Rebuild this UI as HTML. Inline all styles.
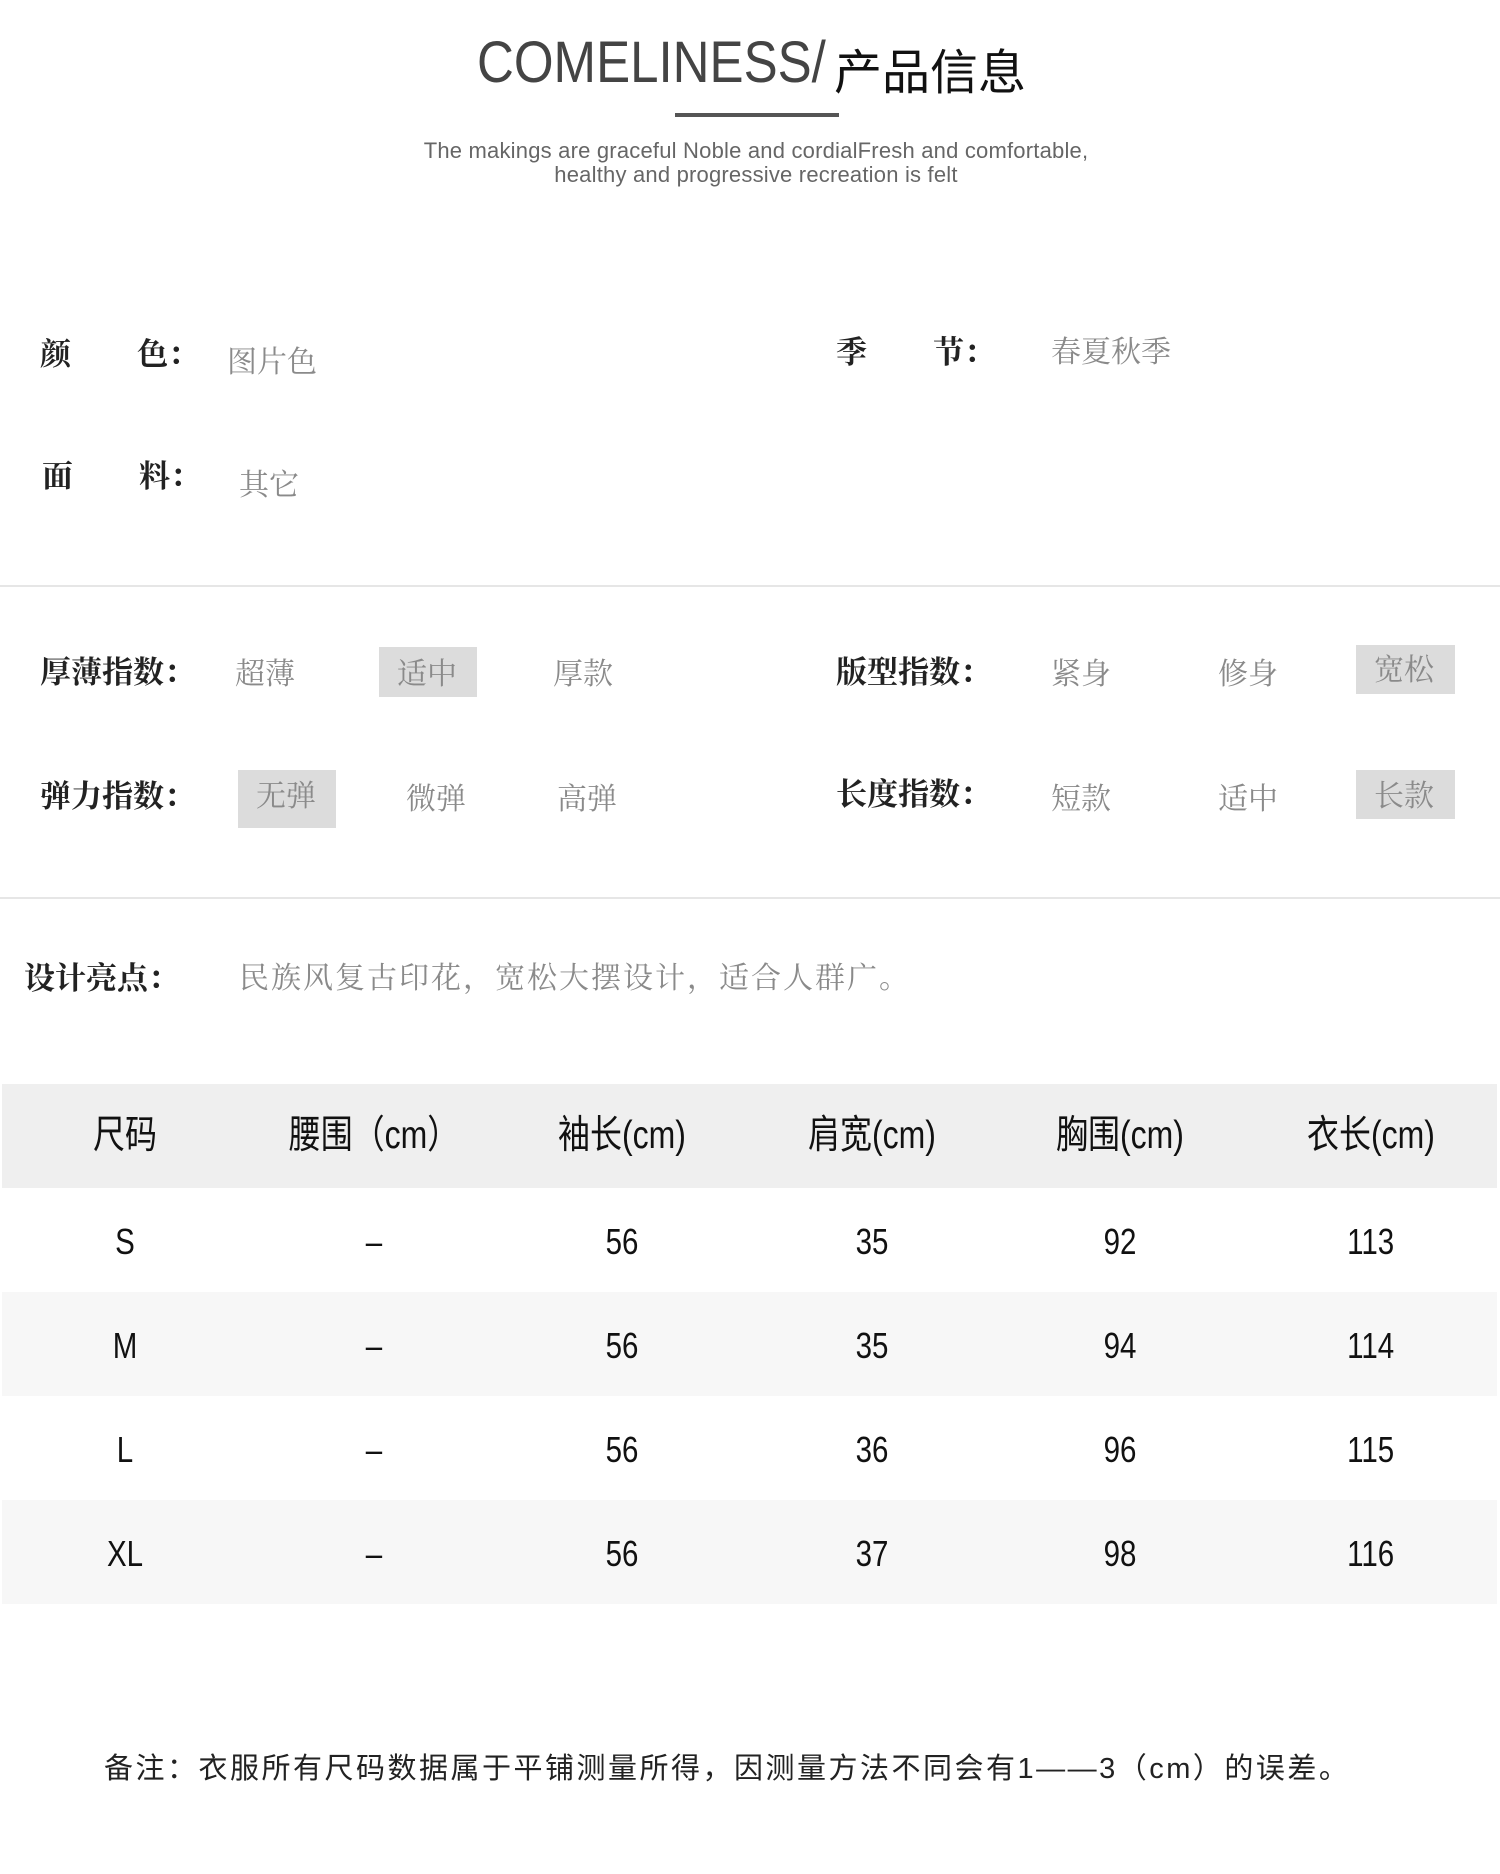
<!DOCTYPE html>
<html><head><meta charset="utf-8">
<style>
*{margin:0;padding:0;box-sizing:border-box}
body{width:1500px;height:1874px;background:#fff;position:relative;overflow:hidden;font-family:"Liberation Serif","Noto Serif CJK SC",serif}
.a{position:absolute;white-space:nowrap;line-height:1}
.lb{font-family:"Noto Serif CJK SC",serif;font-weight:700;font-size:31px;color:#222}
.v{font-family:"Noto Serif CJK SC",serif;font-size:30px;color:#8a8a8a}
.box{position:absolute;background:#dcdcdc}
.hr{position:absolute;left:0;width:1500px;height:2px;background:#e6e6e6}
.row{position:absolute;left:2px;width:1495px;height:104px}
.c{position:absolute;width:250px;text-align:center;font-family:"Liberation Sans","Noto Sans CJK SC",sans-serif;color:#111;line-height:1}
.c span{display:inline-block;transform:scaleX(0.82)}
</style></head><body>
<div class="a" style="left:477px;top:34px;font-family:'Liberation Sans',sans-serif;font-size:58px;color:#444;transform:scaleX(0.88);transform-origin:left">COMELINESS/</div>
<div class="a" style="left:834px;top:44px;font-family:'Noto Sans CJK SC',sans-serif;font-size:48px;color:#111">产品信息</div>
<div style="position:absolute;left:675px;top:113px;width:164px;height:4px;background:#555"></div>
<div class="a" style="left:0;width:1512px;text-align:center;top:140px;font-family:'Liberation Sans',sans-serif;font-size:22px;color:#666;letter-spacing:0.2px">The makings are graceful Noble and cordialFresh and comfortable,</div>
<div class="a" style="left:0;width:1512px;text-align:center;top:164px;font-family:'Liberation Sans',sans-serif;font-size:22px;color:#666;letter-spacing:0.2px">healthy and progressive recreation is felt</div>

<div class="a lb" style="left:40px;top:336px">颜<span style="margin-left:66px">色：</span></div>
<div class="a v" style="left:227px;top:344px">图片色</div>
<div class="a lb" style="left:836px;top:334px">季<span style="margin-left:66px">节：</span></div>
<div class="a v" style="left:1051px;top:334px">春夏秋季</div>
<div class="a lb" style="left:42px;top:458px">面<span style="margin-left:66px">料：</span></div>
<div class="a v" style="left:239px;top:467px">其它</div>

<div class="hr" style="top:585px"></div>

<div class="box" style="left:379px;top:647px;width:98px;height:50px"></div>
<div class="box" style="left:1356px;top:645px;width:99px;height:49px"></div>
<div class="box" style="left:238px;top:770px;width:98px;height:58px"></div>
<div class="box" style="left:1356px;top:770px;width:99px;height:49px"></div>

<div class="a lb" style="left:40px;top:654px">厚薄指数：</div>
<div class="a v" style="left:235px;top:656px">超薄</div>
<div class="a v" style="left:397px;top:656px">适中</div>
<div class="a v" style="left:553px;top:656px">厚款</div>
<div class="a lb" style="left:836px;top:654px">版型指数：</div>
<div class="a v" style="left:1051px;top:656px">紧身</div>
<div class="a v" style="left:1218px;top:656px">修身</div>
<div class="a v" style="left:1374px;top:652px">宽松</div>

<div class="a lb" style="left:40px;top:778px">弹力指数：</div>
<div class="a v" style="left:256px;top:778px">无弹</div>
<div class="a v" style="left:406px;top:781px">微弹</div>
<div class="a v" style="left:557px;top:781px">高弹</div>
<div class="a lb" style="left:836px;top:776px">长度指数：</div>
<div class="a v" style="left:1051px;top:781px">短款</div>
<div class="a v" style="left:1218px;top:781px">适中</div>
<div class="a v" style="left:1374px;top:778px">长款</div>

<div class="hr" style="top:897px"></div>

<div class="a lb" style="left:24px;top:960px">设计亮点：</div>
<div class="a v" style="left:239px;top:960px;letter-spacing:2px">民族风复古印花，宽松大摆设计，适合人群广。</div>

<div class="row" style="top:1084px;background:#efefef"></div>
<div class="row" style="top:1292px;background:#f7f7f7"></div>
<div class="row" style="top:1500px;background:#f7f7f7"></div>

<div style="position:absolute;left:0;top:1116px;width:1500px;font-size:39px">
<div class="c" style="left:0"><span>尺码</span></div>
<div class="c" style="left:249px"><span>腰围（cm）</span></div>
<div class="c" style="left:497px"><span>袖长(cm)</span></div>
<div class="c" style="left:747px"><span>肩宽(cm)</span></div>
<div class="c" style="left:995px"><span>胸围(cm)</span></div>
<div class="c" style="left:1246px"><span>衣长(cm)</span></div>
</div>

<div style="position:absolute;left:0;top:1224px;width:1500px;font-size:36px">
<div class="c" style="left:0"><span>S</span></div><div class="c" style="left:249px"><span>–</span></div><div class="c" style="left:497px"><span>56</span></div><div class="c" style="left:747px"><span>35</span></div><div class="c" style="left:995px"><span>92</span></div><div class="c" style="left:1246px"><span>113</span></div>
</div>
<div style="position:absolute;left:0;top:1328px;width:1500px;font-size:36px">
<div class="c" style="left:0"><span>M</span></div><div class="c" style="left:249px"><span>–</span></div><div class="c" style="left:497px"><span>56</span></div><div class="c" style="left:747px"><span>35</span></div><div class="c" style="left:995px"><span>94</span></div><div class="c" style="left:1246px"><span>114</span></div>
</div>
<div style="position:absolute;left:0;top:1432px;width:1500px;font-size:36px">
<div class="c" style="left:0"><span>L</span></div><div class="c" style="left:249px"><span>–</span></div><div class="c" style="left:497px"><span>56</span></div><div class="c" style="left:747px"><span>36</span></div><div class="c" style="left:995px"><span>96</span></div><div class="c" style="left:1246px"><span>115</span></div>
</div>
<div style="position:absolute;left:0;top:1536px;width:1500px;font-size:36px">
<div class="c" style="left:0"><span>XL</span></div><div class="c" style="left:249px"><span>–</span></div><div class="c" style="left:497px"><span>56</span></div><div class="c" style="left:747px"><span>37</span></div><div class="c" style="left:995px"><span>98</span></div><div class="c" style="left:1246px"><span>116</span></div>
</div>

<div class="a" style="left:104px;top:1755px;font-family:'Liberation Sans','Noto Sans CJK SC',sans-serif;font-size:29px;color:#222;letter-spacing:2.5px">备注：衣服所有尺码数据属于平铺测量所得，因测量方法不同会有1——3（cm）的误差。</div>
</body></html>
